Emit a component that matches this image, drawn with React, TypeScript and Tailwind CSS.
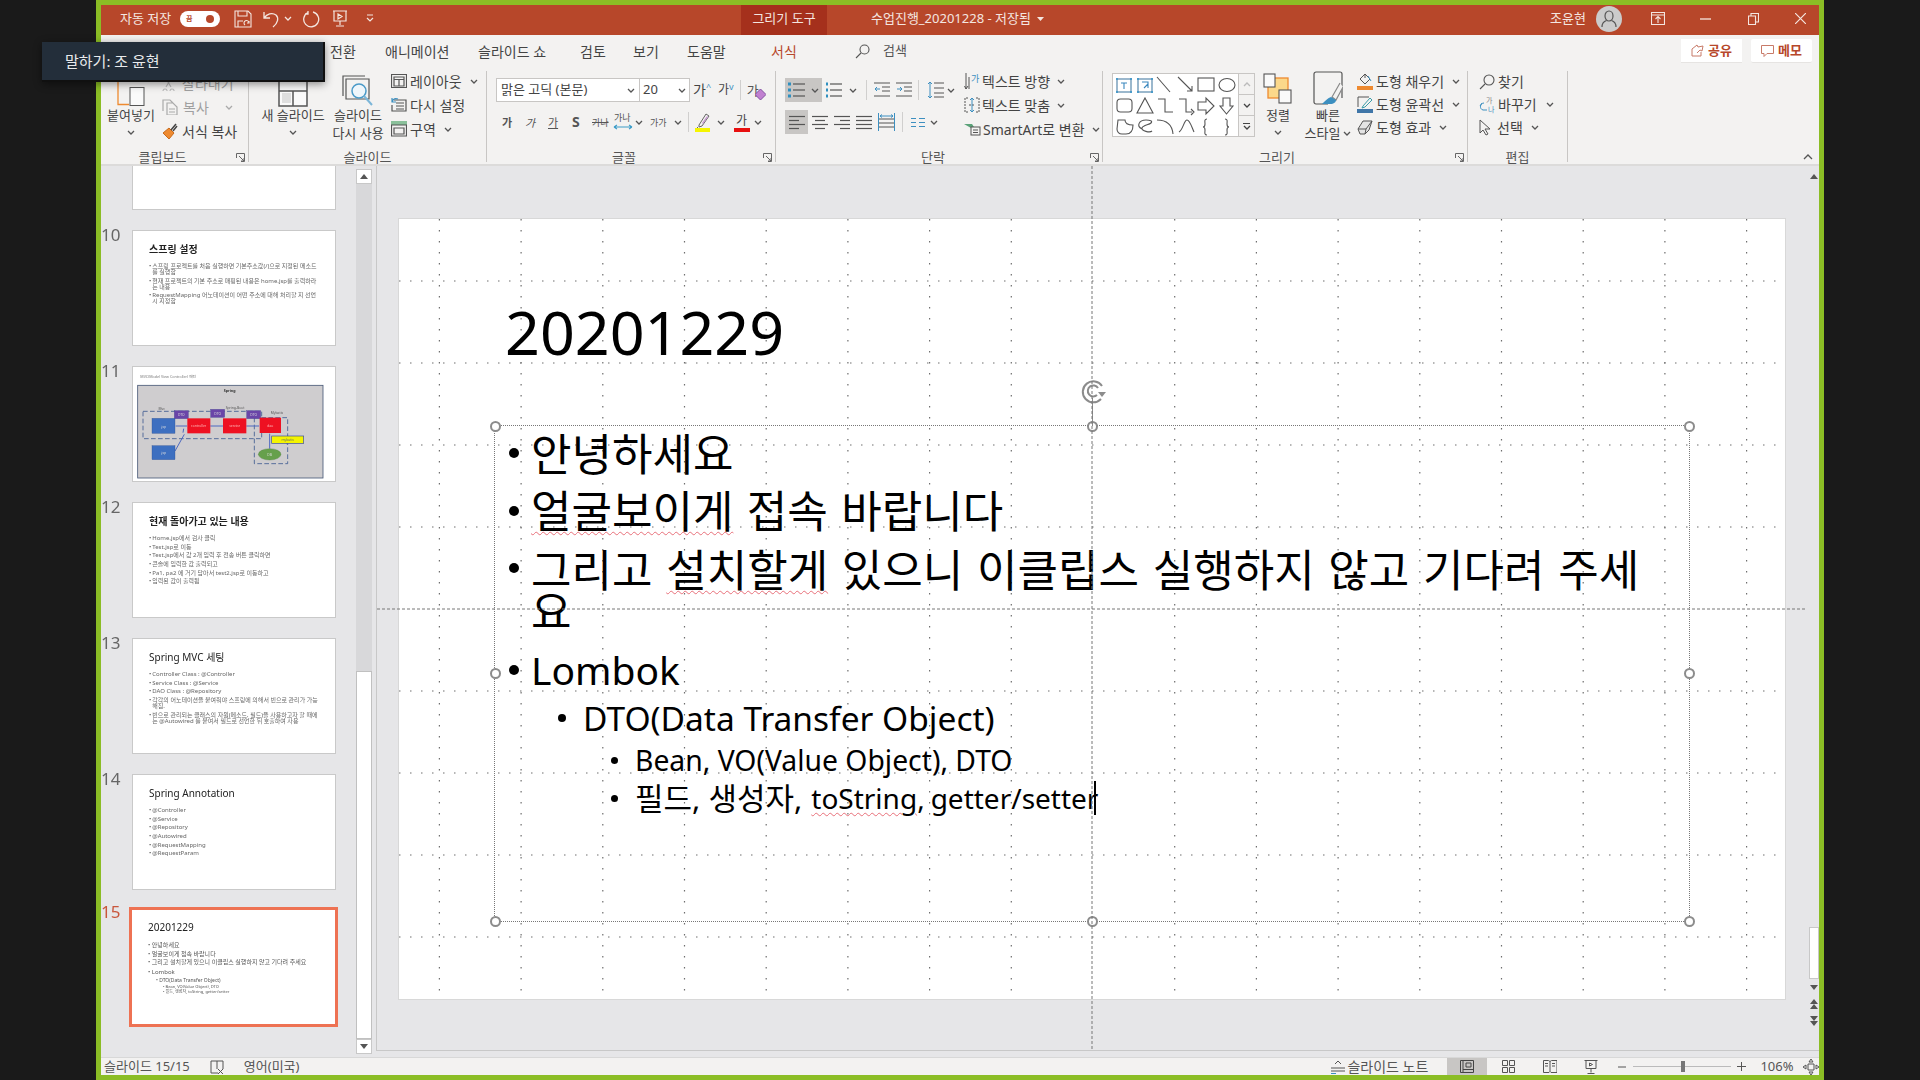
import React from 'react';

const Chev = ({ c = '#555', className = '' }: { c?: string; className?: string }) => (
  <svg width="8" height="5" viewBox="0 0 8 5" className={`shrink-0 ${className}`}>
    <path d="M1 1l3 3 3-3" fill="none" stroke={c} strokeWidth="1.3" />
  </svg>
);

const Launcher = () => (
  <svg width="9" height="9" viewBox="0 0 9 9" className="absolute right-[3px] bottom-[0px]">
    <path d="M.5 5V.5H8.5V8.5H5M3 3l5 5M8 5v3H5" fill="none" stroke="#666" strokeWidth="1" />
  </svg>
);

const SmallIcon = ({ children, w = 16, h = 16 }: { children: React.ReactNode; w?: number; h?: number }) => (
  <svg width={w} height={h} viewBox={`0 0 ${w} ${h}`} fill="none" stroke="#555" strokeWidth="1.2" className="shrink-0">
    {children}
  </svg>
);

// small ribbon command: icon + label + chevron
const Cmd = ({ icon, label, chev = true, muted = false, h = 'h-[24px]', gap = 'gap-[4px]', chevGap = 'ml-[5px]' }: { icon: React.ReactNode; label: string; chev?: boolean; muted?: boolean; h?: string; gap?: string; chevGap?: string }) => (
  <div className={`flex items-center text-[14px] ${h} ${gap} ${muted ? 'text-[#a0a0a0]' : 'text-[#444]'}`}>
    {icon}
    <span className="whitespace-nowrap">{label}</span>
    {chev && <Chev className={chevGap} c={muted ? '#aaa' : '#555'} />}
  </div>
);

const Group = ({ w, label, labelCls = '', launcher = false, children }: { w: string; label: string; labelCls?: string; launcher?: boolean; children: React.ReactNode }) => (
  <div className={`relative flex flex-col shrink-0 h-[91px] mt-[1px] border-r border-[#c8c6c4] ${w}`}>
    <div className="flex h-[77px] shrink-0">{children}</div>
    <div className={`text-center text-[13px] leading-[20px] text-[#555] -mt-[1px] shrink-0 ${labelCls}`}>{label}</div>
    {launcher && <Launcher />}
  </div>
);

const BigBtn = ({ icon, lines, chev = false, w }: { icon: React.ReactNode; lines: React.ReactNode[]; chev?: boolean; w: string }) => (
  <div className={`flex flex-col items-center shrink-0 ${w}`}>
    <div className="h-[36px] flex items-end justify-center">{icon}</div>
    {lines.map((l, i) => (
      <div key={i} className="leading-[17.500px] whitespace-nowrap text-[#444] flex items-center">{l}</div>
    ))}
    {chev && <Chev className="mt-[5px]" />}
  </div>
);

const BulletList = ({ numbered = false }: { numbered?: boolean }) => (
  <svg width="18" height="18" viewBox="0 0 18 18" fill="none" className="shrink-0">
    {[3, 9, 15].map((y) => (
      <g key={y}>
        <rect x={numbered ? 1 : 0} y={y - 1.5} width={numbered ? 2 : 3} height="3" fill="#2f8fc0" />
        <path d={`M5 ${y}H17`} stroke="#555" strokeWidth="1.2" />
      </g>
    ))}
  </svg>
);

const Align = ({ mode }: { mode: 'l' | 'c' | 'r' | 'j' }) => {
  const rows = mode === 'j' ? [16, 16, 16, 16] : [16, 10, 16, 10];
  return (
    <svg width="16" height="15" viewBox="0 0 16 15" className="shrink-0">
      {rows.map((w, i) => {
        const x = mode === 'c' ? (16 - w) / 2 : mode === 'r' ? 16 - w : 0;
        return <path key={i} d={`M${x} ${1.5 + i * 4}h${w}`} stroke="#555" strokeWidth="1.2" />;
      })}
    </svg>
  );
};

const Gallery = () => (
  <svg width="125" height="62" viewBox="0 0 125 62" fill="none" stroke="#555" strokeWidth="1.1" className="shrink-0">
    <rect x="4" y="5" width="14" height="13" stroke="#4a7ea5" />
    <rect x="25" y="5" width="14" height="13" stroke="#4a7ea5" />
    {[[4, 5], [18, 5], [4, 18], [18, 18], [25, 5], [39, 5], [25, 18], [39, 18]].map(([x, y]) => (
      <rect key={`${x}-${y}`} x={x - 1} y={y - 1} width="2" height="2" fill="#4a9ac8" stroke="none" />
    ))}
    <path d="M8 9h6M11 9v6M29 8h6v6M31 14l4-4" stroke="#3a87bd" />
    <path d="M44 3l13 15M65 3l14 14M79 12v5h-5" />
    <rect x="85" y="4" width="16" height="13" />
    <ellipse cx="114" cy="11" rx="8" ry="6.5" />
    <rect x="4" y="25" width="15" height="13" rx="3.5" />
    <path d="M32 24l8 15H24zM45 25h7v13h8M66 25h7v13h6M78 35l3 3-3 3M85 28h8v-4l8 8-8 8v-4h-8zM110 24h7v8h3l-6.500 8-6.500-8h3z" />
    <path d="M5 46h7c0 4 3 5 8 5 0 5-2 9-7 9H9c-3 0-5-2-5-5zM29 55c-6-3-3-9 4-9 4 0 7 1 5 3-2 2-8 2-9 5s8 5 10 3M44 46c7 0 15 3 16 14M66 58c4-2 5-12 8-12s5 8 7 12" />
    <path d="M94 45c-3 0-2 3-2 5s-1 3-2 3c1 0 2 1 2 3s-1 5 2 5M112 45c3 0 2 3 2 5s1 3 2 3c-1 0-2 1-2 3s1 5-2 5" />
  </svg>
);

const Handle = ({ className }: { className: string }) => (
  <div className={`absolute w-[11px] h-[11px] -ml-[5.5px] -mt-[5.5px] rounded-full bg-white border-2 border-[#8c8c8c] ${className}`} />
);

const Err = ({ children }: { children: React.ReactNode }) => (
  <span className="underline decoration-wavy decoration-[#e8707a] decoration-1 underline-offset-[3px]">{children}</span>
);

const ThumbShell = ({ num, active = false, children }: { num: number; active?: boolean; children: React.ReactNode }) => (
  <div className="flex">
    <div className={`w-[31px] text-[17px] leading-[18px] -mt-[4px] blur-[0.2px] ${active ? 'text-[#c9573d]' : 'text-[#666]'}`}>{num}</div>
    <div className={active ? 'w-[209px] h-[120px] -ml-[3px] border-[3px] border-[#ee7253] bg-white' : 'w-[204px] h-[116px] bg-white border border-[#c9c9c9]'}>
      {children}
    </div>
  </div>
);

const Thumb = ({ num, title, bold = false, items }: { num: number; title: string; bold?: boolean; items: string[] }) => (
  <ThumbShell num={num}>
    <div className="pl-[16px] pr-[17px] pt-[11px] blur-[0.3px]">
      <div className={`text-[10px] leading-[14px] text-[#222] ${bold ? 'font-bold' : ''}`}>{title}</div>
      <div className="mt-[7px] text-[6px] leading-[6px] text-[#666]">
        {items.map((t) => (
          <div key={t} className="flex gap-[1px] mb-[2.700px]">
            <span className="text-[#555]">•</span>
            <span>{t}</span>
          </div>
        ))}
      </div>
    </div>
  </ThumbShell>
);

const Diagram = () => (
  <svg width="204" height="116" viewBox="0 0 612 348" className="blur-[0.3px]">
    <text x="22" y="32" fontSize="11" fill="#777">MVC(Model View Controller) 패턴</text>
    <rect x="14" y="55" width="556" height="278" fill="#cfcdcf" stroke="#4a5a78" strokeWidth="2.500" />
    <text x="290" y="74" fontSize="11" fontWeight="bold" textAnchor="middle" fill="#333">Spring</text>
    <rect x="30" y="133" width="356" height="82" fill="none" stroke="#3e5a90" strokeWidth="2.500" strokeDasharray="14 7" />
    <rect x="364" y="152" width="100" height="138" fill="none" stroke="#3e5a90" strokeWidth="2.500" strokeDasharray="14 7" />
    <text x="86" y="130" fontSize="10" textAnchor="middle" fill="#555">Mvc</text>
    <text x="306" y="125" fontSize="10" textAnchor="middle" fill="#555">Spring-Boot</text>
    <text x="432" y="140" fontSize="10" textAnchor="middle" fill="#555">Mybatis</text>
    {[[124, 131], [233, 127], [341, 131]].map(([x, y]) => (
      <g key={x}>
        <rect x={x} y={y} width="42" height="24" fill="#6a45a8" stroke="#3c3c90" />
        <text x={x + 21} y={y + 16} fontSize="10" textAnchor="middle" fill="#ddd">DTO</text>
      </g>
    ))}
    <path d="M128 177H162M232 177H270M340 177H378M152 185l-2 12M126 252l28-50M410 200V245M462 222v10" stroke="#4c68c0" strokeWidth="3" fill="none" />
    <rect x="57" y="154" width="69" height="45" fill="#3d6fc0" stroke="#2d4f90" />
    <text x="91" y="182" fontSize="10" textAnchor="middle" fill="#ddd">.jsp</text>
    <rect x="57" y="236" width="69" height="42" fill="#3d6fc0" stroke="#2d4f90" />
    <text x="91" y="262" fontSize="10" textAnchor="middle" fill="#ddd">.jsp</text>
    <rect x="163" y="154" width="69" height="45" fill="#ee1122" />
    <text x="197" y="181" fontSize="10" textAnchor="middle" fill="#fbb">controller</text>
    <rect x="270" y="154" width="70" height="45" fill="#ee1122" />
    <text x="305" y="181" fontSize="10" textAnchor="middle" fill="#fbb">service</text>
    <rect x="380" y="152" width="64" height="46" fill="#ee1122" />
    <text x="412" y="180" fontSize="10" textAnchor="middle" fill="#fbb">dao</text>
    <rect x="416" y="207" width="96" height="22" fill="#f4f400" stroke="#3a4aa0" strokeWidth="2" />
    <text x="464" y="222" fontSize="10" textAnchor="middle" fill="#666">mybatis</text>
    <ellipse cx="410" cy="262" rx="34" ry="17" fill="#66a04c" stroke="#4c7c3a" />
    <text x="410" y="267" fontSize="10" textAnchor="middle" fill="#ddd">DB</text>
  </svg>
);

const thumbs = [
  { num: 10, title: '스프링 설정', bold: true, items: ['스프링 프로젝트를 처음 실행하면 기본주소값(/)으로 지정된 메소드를 실행함', '현재 프로젝트의 기본 주소로 매핑된 내용은 home.jsp를 출력하라는 내용', 'RequestMapping 어노테이션이 어떤 주소에 대해 처리할 지 선언 시 지정함'] },
  { num: 12, title: '현재 돌아가고 있는 내용', bold: true, items: ['Home.jsp에서 검사 클릭', 'Test.jsp로 이동', 'Test.jsp에서 값 2개 입력 후 전송 버튼 클릭하면', '콘솔에 입력한 값 출력되고', 'Pa1, pa2 에 거기 담아서 test2.jsp로 이동하고', '입력된 값이 출력됨'] },
  { num: 13, title: 'Spring MVC 세팅', items: ['Controller Class : @Controller', 'Service Class : @Service', 'DAO Class : @Repository', '각각의 어노테이션을 붙여줘야 스프링에 의해서 빈으로 관리가 가능해짐.', '빈으로 관리되는 클래스의 자원(메소드, 필드)을 사용하고자 할 때에는 @Autowired 를 붙여서 필드로 선언한 뒤 호출하여 사용'] },
  { num: 14, title: 'Spring Annotation', items: ['@Controller', '@Service', '@Repository', '@Autowired', '@RequestMapping', '@RequestParam'] },
];

const vGrid = [-8, -7, -6, -5, -4, -3, -2, -1, 1, 2, 3, 4, 5, 6, 7, 8].map((k) => 694 + k * 81.7);
const hGrid = [-4, -3, -2, -1, 1, 2, 3, 4].map((k) => 390 + k * 82);

function Level1({ cls, dot, children }: { cls: string; dot: string; children: React.ReactNode }) {
  return (
    <div className={`relative pl-[36px] ${cls}`}>
      <span className={`absolute left-[14px] w-[10px] h-[10px] rounded-full bg-black ${dot}`} />
      {children}
    </div>
  );
}

export default function App() {
  return (
    <div className="w-[1920px] h-[1080px] bg-[#1a1a1a] px-[96px] overflow-hidden relative font-['Noto_Sans','Noto_Sans_CJK_KR',sans-serif] text-[13px]">
      <div className="h-full border-x-[5px] border-y-[5px] border-[#8bbd25] flex flex-col bg-[#e6e6e8]">
        {/* title bar */}
        <div className="h-[30px] shrink-0 pb-[3px] bg-[#b7472a] flex items-center text-[#f4e6e0] text-[13px]">
          <span className="ml-[19px] w-[60px]">자동 저장</span>
          <div className="w-[40px] h-[16px] rounded-full bg-white flex items-center justify-between px-[6px]">
            <span className="text-[7px] text-[#b7472a] leading-none font-bold">끔</span>
            <span className="w-[8px] h-[8px] rounded-full bg-[#b7472a]" />
          </div>
          <svg width="18" height="18" viewBox="0 0 18 18" fill="none" stroke="#f4e6e0" strokeWidth="1.100" className="ml-[14px]">
            <path d="M1 1h13l3 3v13H1zM4 1v5h9V1M4 17v-6h5M11 15a2.500 2.500 0 1 1 4-2M15 11v2h-2" />
          </svg>
          <svg width="20" height="18" viewBox="0 0 20 18" fill="none" stroke="#f4e6e0" strokeWidth="1.300" className="ml-[10px]">
            <path d="M2 2v6h6M2 8c3-4 8-6 12-3 3 3 2 8-3 12" />
          </svg>
          <Chev c="#f4e6e0" className="ml-[2px]" />
          <svg width="18" height="18" viewBox="0 0 18 18" fill="none" stroke="#f4e6e0" strokeWidth="1.300" className="ml-[10px]">
            <path d="M11 2a7.500 7.500 0 1 1-5 .5M6 1v3H3" />
          </svg>
          <svg width="16" height="17" viewBox="0 0 16 17" fill="none" stroke="#f4e6e0" strokeWidth="1.200" className="ml-[12px]">
            <path d="M1 1h14M2 1v10h12V1M8 11v4M4 16h8M6 4l4 2.500L6 9z" />
          </svg>
          <svg width="8" height="9" viewBox="0 0 8 9" fill="none" stroke="#f4e6e0" strokeWidth="1.200" className="ml-[18px]">
            <path d="M1 1h6M1 4l3 3 3-3" />
          </svg>
          <div className="ml-[367px] w-[86px] h-[30px] self-start -mb-[3px] pb-[3px] bg-[#a5301c] flex items-center justify-center">그리기 도구</div>
          <span className="ml-[44px]">수업진행_20201228  -  저장됨</span>
          <svg width="7" height="4" viewBox="0 0 7 4" className="ml-[6px]"><path d="M0 0h7L3.500 4z" fill="#f4e6e0" /></svg>
          <span className="ml-auto">조윤현</span>
          <div className="ml-[10px] w-[26px] h-[26px] rounded-full bg-[#cbcbcb] flex items-center justify-center">
            <svg width="16" height="18" viewBox="0 0 16 18" fill="none" stroke="#555" strokeWidth="1.200">
              <ellipse cx="8" cy="6" rx="4" ry="5" />
              <path d="M1 17c0-4 3-6 4.500-6.500M15 17c0-4-3-6-4.500-6.500" />
            </svg>
          </div>
          <svg width="14" height="13" viewBox="0 0 14 13" fill="none" stroke="#f4e6e0" strokeWidth="1.100" className="ml-[29px]">
            <path d="M.5.500h13v12H.5zM1 3h12M7 11V5M4.500 7L7 4.500 9.500 7" />
          </svg>
          <svg width="11" height="2" viewBox="0 0 11 2" className="ml-[35px]"><path d="M0 1h11" stroke="#f4e6e0" strokeWidth="1.300" /></svg>
          <svg width="11" height="12" viewBox="0 0 11 12" fill="none" stroke="#f4e6e0" strokeWidth="1.100" className="ml-[37px]">
            <path d="M.5 3h7v8.500h-7zM3 3V.5h7.500V9H8" />
          </svg>
          <svg width="11" height="11" viewBox="0 0 11 11" stroke="#f4e6e0" strokeWidth="1.200" className="ml-[36px] mr-[13px]">
            <path d="M0 0l11 11M11 0L0 11" />
          </svg>
        </div>

        {/* tabs */}
        <div className="h-[35px] shrink-0 pb-[3px] bg-[#f3f2f1] flex items-center text-[14px] text-[#444]">
          <span className="ml-[140px] w-[89px]">디자인</span>
          <span className="w-[55px]">전환</span>
          <span className="w-[93px]">애니메이션</span>
          <span className="w-[102px]">슬라이드 쇼</span>
          <span className="w-[53px]">검토</span>
          <span className="w-[54px]">보기</span>
          <span className="w-[84px]">도움말</span>
          <span className="w-[84px] text-[#b7472a]">서식</span>
          <svg width="15" height="15" viewBox="0 0 15 15" fill="none" stroke="#555" strokeWidth="1.100">
            <circle cx="9.500" cy="5.500" r="4.500" />
            <path d="M6 9l-5 5" />
          </svg>
          <span className="ml-[13px] text-[13px] text-[#555]">검색</span>
          <div className="ml-auto w-[61px] h-[24px] text-[13px] bg-white flex items-center justify-center gap-[4px] text-[#b7472a] font-bold border-b border-[#e6e4e2]">
            <svg width="13" height="13" viewBox="0 0 13 13" fill="none" stroke="#c87a68" strokeWidth="1"><path d="M1 5v7h9V8M1 5l5-4 1 2 5-1-1 5-2-1-3 3" /></svg>
            공유
          </div>
          <div className="ml-[9px] mr-[7px] w-[61px] h-[24px] text-[13px] bg-white flex items-center justify-center gap-[4px] text-[#b7472a] font-bold rounded-[2px] border-b border-[#e6e4e2]">
            <svg width="13" height="12" viewBox="0 0 13 12" fill="none" stroke="#c87a68" strokeWidth="1"><path d="M.5.500h12v8H6l-3 3v-3H.5z" /></svg>
            메모
          </div>
        </div>

        {/* ribbon */}
        <div className="h-[96px] shrink-0 bg-[#f3f2f1] border-b-2 border-[#dcdbda] flex text-[13px]">
          <Group w="w-[148px]" label="클립보드" labelCls="pr-[24px]" launcher>
            <BigBtn
              w="w-[60px]"
              lines={['붙여넣기']}
              chev
              icon={
                <svg width="28" height="35" viewBox="0 0 28 35" fill="none">
                  <path d="M12 32.500H1V10" stroke="#ee8a30" strokeWidth="1.300" />
                  <rect x="13" y="15.500" width="14" height="18" fill="#fafafa" stroke="#555" />
                </svg>
              }
            />
            <div className="ml-[1px]">
              <Cmd muted label="잘라내기" chev={false} icon={<SmallIcon><path d="M3 14a2 2 0 1 0 .1 0M10 14a2 2 0 1 0 .1 0M4 12l6-10M9 12L3 2" stroke="#bbb" /></SmallIcon>} />
              <Cmd muted label="복사" chevGap="ml-[12px]" icon={<SmallIcon w={17}><path d="M1 12V1h7l3 3M5 4h6l4 4v8H5zM7 10h6M7 13h6" stroke="#aaa" /></SmallIcon>} />
              <Cmd label="서식 복사" chev={false} icon={
                <svg width="16" height="17" viewBox="0 0 16 17" fill="none">
                  <path d="M1 10l6-5 5 5-5 6z" fill="#ee8a30" stroke="#c76a1c" />
                  <path d="M9 7l5-6M11 8l4-5" stroke="#444" strokeWidth="1.500" />
                </svg>
              } />
            </div>
          </Group>

          <Group w="w-[238px]" label="슬라이드">
            <BigBtn
              w="w-[66px] ml-[11px]"
              lines={['새 슬라이드']}
              chev
              icon={
                <svg width="30" height="30" viewBox="0 0 30 30" fill="none" stroke="#555" strokeWidth="1.500">
                  <rect x="1" y="1" width="28" height="28" fill="#fafafa" />
                  <path d="M1 14h28M15 14v15" />
                  <rect x="4" y="16" width="9" height="10" fill="#dfdfdf" stroke="none" />
                </svg>
              }
            />
            <BigBtn
              w="w-[58px] ml-[3px]"
              lines={['슬라이드', '다시 사용']}
              icon={
                <svg width="32" height="32" viewBox="0 0 32 32" fill="none" stroke="#555" strokeWidth="1.200">
                  <path d="M1 21V1h22M4 24V4h23v20z" />
                  <circle cx="17" cy="16" r="7" stroke="#4a9ac8" strokeWidth="1.500" fill="#eef6fb" />
                  <path d="M22 21l8 9" stroke="#7cb6d8" strokeWidth="2" />
                </svg>
              }
            />
            <div className="ml-[4px] -mt-[2px]">
              <Cmd label="레이아웃" gap="gap-[3px]" icon={<SmallIcon><path d="M.5 1.500h15v13H.5zM3 4h10v9H3zM3 6.500h10M8 6.500V13" /></SmallIcon>} />
              <Cmd label="다시 설정" chev={false} gap="gap-[3px]" icon={<SmallIcon><path d="M3 3h12v11H1V8M5 6h8M5 9h8M5 12h8" /><path d="M7 2c-3-1-5 0-6 3M1 1v4h4" stroke="#3c8fc0" /></SmallIcon>} />
              <Cmd label="구역" gap="gap-[3px]" icon={<SmallIcon><rect x="0" y="0" width="16" height="4" fill="#8ac09a" stroke="none" /><path d="M.5 4h15v11H.5zM3 7h10v6H3z" /></SmallIcon>} />
            </div>
          </Group>

          <Group w="w-[289px]" label="글꼴" labelCls="pr-[14px]" launcher>
            <div className="pt-[7px] pl-[9px]">
              <div className="flex items-center h-[24px]">
                <div className="w-[144px] h-[24px] bg-white border border-[#c8c6c4] flex items-center justify-between px-[4px] text-[#444]">
                  맑은 고딕 (본문)<Chev />
                </div>
                <div className="w-[50px] h-[24px] bg-white border border-l-0 border-[#c8c6c4] flex items-center justify-between px-[3px] text-[#444]">
                  20<Chev />
                </div>
                <span className="ml-[3px] text-[14px] text-[#444] leading-none">가</span>
                <span className="text-[#3c8fc0] text-[9px] -mt-[8px] leading-none">^</span>
                <span className="ml-[7px] text-[12px] text-[#444] leading-none">가</span>
                <span className="text-[#3c8fc0] text-[9px] -mt-[8px] leading-none">v</span>
                <div className="ml-[6px] w-px h-[20px] bg-[#d0cfce]" />
                <span className="ml-[6px] text-[13px] leading-none text-[#555] relative">
                  가
                  <svg width="11" height="11" viewBox="0 0 11 11" className="absolute left-[8px] top-[5px]"><path d="M5.500 0L11 5.500 5.500 11 0 5.500z" fill="#c080d0" stroke="#8050a0" /></svg>
                </span>
              </div>
              <div className="flex items-center h-[24px] mt-[8px] text-[#555] leading-none">
                <span className="ml-[6px] font-bold text-[11px] w-[23px]">가</span>
                <span className="text-[11px] italic w-[23px]">가</span>
                <span className="text-[11px] underline w-[24px]">가</span>
                <span className="font-bold text-[14px] w-[20px]">S</span>
                <span className="text-[9px] line-through w-[21px]">가나</span>
                <svg width="20" height="20" viewBox="0 0 20 20" className="mr-[2px]">
                  <text x="1" y="9" fontSize="9" fill="#555">가나</text>
                  <path d="M1 15h18M1 15l3-2M1 15l3 2M19 15l-3-2M19 15l-3 2" stroke="#3c9cc8" strokeWidth="1.100" fill="none" />
                </svg>
                <Chev />
                <span className="ml-[7px] text-[9px] w-[24px]">가가</span>
                <Chev />
                <div className="ml-[6px] w-px h-[20px] bg-[#d0cfce]" />
                <svg width="16" height="19" viewBox="0 0 16 19" fill="none" className="ml-[6px]">
                  <path d="M4 12L11 1l3 2-7 10-3 1zM3 14l-1 1" stroke="#666" />
                  <path d="M7 10l5-7 1 1-5 7z" fill="#c59ad0" />
                  <rect x="0" y="15" width="15" height="4" fill="#f5f500" />
                </svg>
                <Chev className="ml-[6px]" />
                <svg width="16" height="19" viewBox="0 0 16 19" className="ml-[9px]">
                  <text x="2" y="12" fontSize="12" fill="#444">가</text>
                  <rect x="0" y="15" width="16" height="4" fill="#e81010" />
                </svg>
                <Chev className="ml-[4px]" />
              </div>
            </div>
          </Group>

          <Group w="w-[327px]" label="단락" labelCls="pr-[12px]" launcher>
            <div className="pt-[7px] pl-[9px] w-[182px] shrink-0">
              <div className="flex items-center h-[24px]">
                <div className="w-[37px] h-[24px] bg-[#c8c6c4] flex items-center justify-between px-[3px]"><BulletList /><Chev /></div>
                <div className="ml-[3px] flex items-center gap-[6px]"><BulletList numbered /><Chev /></div>
                <div className="ml-[9px] w-px h-[20px] bg-[#d0cfce]" />
                <svg width="16" height="16" viewBox="0 0 16 16" fill="none" stroke="#555" className="ml-[7px]"><path d="M0 1h16M8 5h8M8 9h8M0 14h16" /><path d="M6 7H1M3 5L1 7l2 2" stroke="#3c8fc0" /></svg>
                <svg width="16" height="16" viewBox="0 0 16 16" fill="none" stroke="#555" className="ml-[6px]"><path d="M0 1h16M8 5h8M8 9h8M0 14h16" /><path d="M1 7h5M4 5l2 2-2 2" stroke="#3c8fc0" /></svg>
                <div className="ml-[6px] w-px h-[20px] bg-[#d0cfce]" />
                <svg width="18" height="18" viewBox="0 0 18 18" fill="none" stroke="#555" className="ml-[8px]"><path d="M7 2h10M7 7h10M7 12h10M7 16h10" /><path d="M3 1v16M1 3l2-2 2 2M1 15l2 2 2-2" stroke="#3c8fc0" /></svg>
                <Chev className="ml-[2px]" />
              </div>
              <div className="flex items-center h-[24px] mt-[8px]">
                <div className="w-[23px] h-[24px] bg-[#c8c6c4] flex items-center justify-center"><Align mode="l" /></div>
                <div className="ml-[4px]"><Align mode="c" /></div>
                <div className="ml-[6px]"><Align mode="r" /></div>
                <div className="ml-[6px]"><Align mode="j" /></div>
                <svg width="17" height="18" viewBox="0 0 17 18" fill="none" className="ml-[6px]"><path d="M1 6h15M1 10h15M1 14h15" stroke="#555" /><path d="M.500 0v18M16.500 0v18M2 3h13M2 3l2-1.500M2 3l2 1.500M15 3l-2-1.500M15 3l-2 1.500" stroke="#3c8fc0" /></svg>
                <div className="ml-[7px] w-px h-[20px] bg-[#d0cfce]" />
                <svg width="14" height="11" viewBox="0 0 14 11" fill="none" stroke="#3c8fc0" strokeWidth="1.200" className="ml-[8px]"><path d="M0 1.500h5M0 5.500h5M0 9.500h5M8 1.500h6M8 5.500h6M8 9.500h6" /></svg>
                <Chev className="ml-[5px]" />
              </div>
            </div>
            <div className="pl-[6px] -mt-[2px]">
              <Cmd label="텍스트 방향" gap="gap-[2px]" icon={<svg width="16" height="18" viewBox="0 0 16 18" fill="none" stroke="#555"><path d="M2 1v16M5 5v12M.5 14L2 17l2-3" /><text x="7" y="10" fontSize="9" fill="#3c8fc0" stroke="none">가</text></svg>} />
              <Cmd label="텍스트 맞춤" gap="gap-[2px]" icon={<svg width="16" height="16" viewBox="0 0 16 16" fill="none" stroke="#555"><path d="M4 1H1v14h3M12 1h3v14h-3M5 8h6" strokeDasharray="2 1" /><path d="M8 1v14M6 3l2-2 2 2M6 13l2 2 2-2" stroke="#3c8fc0" /></svg>} />
              <Cmd label="SmartArt로 변환" gap="gap-[2px]" icon={<svg width="17" height="16" viewBox="0 0 17 16" fill="none"><path d="M0 3h8l2 3-3 1z" fill="#5aa278" /><rect x="7" y="6" width="9" height="8" fill="#f3f2f1" stroke="#555" /><path d="M9 9h5M9 11.500h5" stroke="#555" /></svg>} />
            </div>
          </Group>

          <Group w="w-[365px]" label="그리기" labelCls="pr-[16px]" launcher>
            <div className="ml-[9px] mt-[2px] h-[64px] flex border border-[#c8c6c4] bg-white shrink-0">
              <Gallery />
              <div className="w-[16px] flex flex-col bg-[#f3f2f1] border-l border-[#c8c6c4] shrink-0">
                <div className="h-[21px] border-b border-[#c8c6c4] flex items-center justify-center"><svg width="8" height="5" viewBox="0 0 8 5"><path d="M1 4l3-3 3 3" fill="none" stroke="#bbb" strokeWidth="1.300" /></svg></div>
                <div className="h-[21px] border-b border-[#c8c6c4] flex items-center justify-center"><Chev c="#444" /></div>
                <div className="h-[20px] flex flex-col items-center justify-center gap-[1px]"><div className="w-[7px] h-px bg-[#444]" /><Chev c="#444" /></div>
              </div>
            </div>
            <BigBtn
              w="w-[40px] ml-[3px]"
              lines={['정렬']}
              chev
              icon={
                <svg width="30" height="31" viewBox="0 0 30 31" fill="none" stroke="#555" strokeWidth="1.100" className="mb-[3px]">
                  <rect x="5" y="5" width="20" height="20" fill="#fbd88a" stroke="#ee8a30" strokeWidth="1.300" />
                  <rect x="1" y="1" width="11" height="13" fill="#fafafa" />
                  <rect x="16" y="17" width="12" height="13" fill="#fafafa" />
                </svg>
              }
            />
            <BigBtn
              w="w-[46px] ml-[7px]"
              lines={['빠른', <>스타일<Chev className="ml-[3px]" /></>]}
              icon={
                <svg width="30" height="35" viewBox="0 0 30 35" fill="none" stroke="#555" strokeWidth="1.200" className="mb-[1px]">
                  <path d="M15 33H3a2 2 0 0 1-2-2V3a2 2 0 0 1 2-2h24a2 2 0 0 1 2 2v24" />
                  <path d="M27 12l-8 14 4 3 7-13" fill="#f3f2f1" stroke="#888" />
                  <path d="M18 26c-3 1-6 4-9 7h8c4 0 6-2 6-4z" fill="#3c8fc0" stroke="none" />
                </svg>
              }
            />
            <div className="ml-[6px] -mt-[1.500px]">
              <Cmd h="h-[23px]" label="도형 채우기" gap="gap-[3px]" icon={<svg width="16" height="17" viewBox="0 0 16 17" fill="none" stroke="#555"><path d="M8 1l5 5-5 5-5-5zM8 1v4" /><path d="M11 3l3 5" stroke="#3c8fc0" /><rect x="0" y="13" width="16" height="4" fill="#ee8a30" stroke="none" /></svg>} />
              <Cmd h="h-[23px]" label="도형 윤곽선" gap="gap-[3px]" icon={<svg width="16" height="17" viewBox="0 0 16 17" fill="none" stroke="#555"><path d="M1 11V1h11" /><path d="M6 10l7-8 2 2-7 7-3 1z" stroke="#3c9ca8" /><rect x="0" y="13" width="16" height="4" fill="#3f76a8" stroke="none" /></svg>} />
              <Cmd h="h-[23px]" label="도형 효과" gap="gap-[3px]" icon={<svg width="16" height="15" viewBox="0 0 16 15" fill="none" stroke="#555"><path d="M1 9l5-8h9l-3 9-4 4H3z" fill="#e4e4e4" /><path d="M6 1v0M1 9h8l6-8M9 9l-1 5" /></svg>} />
            </div>
          </Group>

          <Group w="w-[100px]" label="편집">
            <div className="ml-[11px] -mt-[1px]">
              <Cmd h="h-[23px]" label="찾기" chev={false} gap="gap-[3px]" icon={<svg width="16" height="16" viewBox="0 0 16 16" fill="none" stroke="#555" strokeWidth="1.100"><circle cx="10" cy="6" r="5" /><path d="M6 10l-5 5" /></svg>} />
              <Cmd h="h-[23px]" label="바꾸기" chevGap="ml-[8px]" gap="gap-[1px]" icon={<svg width="18" height="18" viewBox="0 0 18 18" fill="none"><text x="7" y="7" fontSize="7" fill="#888">가</text><text x="9" y="16" fontSize="7" fill="#3c8fc0">나</text><path d="M8 14H4c-4-1-3-7 1-7M1 10l2-3" stroke="#3c8fc0" /></svg>} />
              <Cmd h="h-[23px]" label="선택" chevGap="ml-[3px]" gap="gap-[5px]" icon={<svg width="13" height="17" viewBox="0 0 13 17" fill="none" stroke="#555"><path d="M1 1v13l3-3 3 5 2-1-3-5h5z" /></svg>} />
            </div>
          </Group>

          <div className="flex-1 flex items-end justify-end pb-[4px] pr-[6px]">
            <svg width="10" height="6" viewBox="0 0 10 6"><path d="M1 5l4-4 4 4" fill="none" stroke="#555" strokeWidth="1.300" /></svg>
          </div>
        </div>

        {/* workspace */}
        <div className="flex-1 min-h-0 flex relative">
          {/* slide sorter */}
          <div className="w-[255px] shrink-0 overflow-hidden flex flex-col gap-[20px] bg-[#e6e6e8]">
            <div className="ml-[31px] w-[204px] h-[44px] shrink-0 bg-white border border-t-0 border-[#c9c9c9]" />
            <Thumb {...thumbs[0]} />
            <ThumbShell num={11}><Diagram /></ThumbShell>
            <Thumb {...thumbs[1]} />
            <Thumb {...thumbs[2]} />
            <Thumb {...thumbs[3]} />
            <div className="-mt-[3px]">
              <ThumbShell num={15} active>
                <div className="pl-[16px] pr-[17px] pt-[10px] blur-[0.3px] text-[#555] text-[6px] leading-[6px]">
                  <div className="text-[10px] leading-[14px] text-[#222]">20201229</div>
                  <div className="mt-[8px]">• 안녕하세요</div>
                  <div className="mt-[2.500px]">• 얼굴보이게 접속 바랍니다</div>
                  <div className="mt-[3px] leading-[5px]">• 그리고 설치할게 있으니 이클립스 실행하지 않고 기다려 주세요</div>
                  <div className="mt-[4px]">• Lombok</div>
                  <div className="pl-[8px] text-[5px] mt-[2px]">• DTO(Data Transfer Object)</div>
                  <div className="pl-[15px] text-[4px] leading-[5.500px] mt-[1px]">• Bean, VO(Value Object), DTO</div>
                  <div className="pl-[15px] text-[4px] leading-[5.500px]">• 필드, 생성자, toString, getter/setter</div>
                </div>
              </ThumbShell>
            </div>
          </div>

          {/* sorter scrollbar */}
          <div className="w-[16px] shrink-0 mb-[6px] mt-[3px] flex flex-col bg-[#d8d8da]">
            <div className="h-[15px] shrink-0 bg-white border border-[#c8c8c8] flex items-center justify-center"><svg width="8" height="5" viewBox="0 0 8 5"><path d="M0 5l4-5 4 5z" fill="#555" /></svg></div>
            <div className="h-[487px] shrink-0" />
            <div className="h-[368px] shrink-0 bg-white border border-[#c0c0c0]" />
            <div className="flex-1" />
            <div className="h-[15px] shrink-0 bg-white border border-[#c8c8c8] flex items-center justify-center"><svg width="8" height="5" viewBox="0 0 8 5"><path d="M0 0l4 5 4-5z" fill="#555" /></svg></div>
          </div>

          {/* slide edit pane */}
          <div className="flex-1 min-w-0 flex ml-[4px] border-l border-[#c8c8c8] border-b mb-[6px] relative">
            <div className="flex-1 min-w-0 pl-[21px] pt-[52px]">
              <div className="relative w-[1388px] h-[782px] bg-white border border-[#d8d8d8] text-black">
                <svg width="1386" height="780" className="absolute left-0 top-0">
                  {hGrid.map((y) => (
                    <path key={y} d={`M0 ${y}H1387`} stroke="#6e6e6e" strokeWidth="1.200" strokeDasharray="1.500 9.500" />
                  ))}
                  {vGrid.map((x) => (
                    <path key={x} d={`M${x} 0V780`} stroke="#6e6e6e" strokeWidth="1.200" strokeDasharray="1.500 9.500" />
                  ))}
                </svg>

                <div className="relative pl-[106px] pt-[80px] text-[61px] leading-[66px]">20201229</div>

                {/* selected text box */}
                <div className="absolute left-[95px] top-[206px] w-[1196px] h-[497px] border border-dotted border-[#777]">
                  <Level1 cls="h-[56px] leading-[56px] text-[44px]" dot="top-[22px]">안녕하세요</Level1>
                  <Level1 cls="h-[58px] leading-[58px] text-[44px] [word-spacing:2px]" dot="top-[24px]"><Err>얼굴보이게</Err> 접속 바랍니다</Level1>
                  <Level1 cls="h-[105px] leading-[42px] pt-[9px] text-[44px] [word-spacing:2.300px]" dot="top-[23px]">그리고 <Err>설치할게</Err> 있으니 이클립스 실행하지 않고 기다려 주세<br />요</Level1>
                  <Level1 cls="h-[50px] leading-[50px] text-[39px]" dot="top-[20px]">Lombok</Level1>
                  <div className="flex items-center h-[46px] text-[33.500px] leading-[46px] pl-[63px]">
                    <span className="w-[8px] h-[8px] rounded-full bg-black mr-[17px]" />DTO(Data Transfer Object)
                  </div>
                  <div className="flex items-center h-[38px] text-[28.300px] pl-[116px]">
                    <span className="w-[7px] h-[7px] rounded-full bg-black mr-[17px]" />Bean, VO(Value Object), DTO
                  </div>
                  <div className="flex items-center h-[38px] text-[28px] pl-[116px]">
                    <span className="w-[7px] h-[7px] rounded-full bg-black mr-[17px]" /><span className="text-[31px]">필드, 생성자,</span><span className="ml-[9px] mr-[6px]"><Err>toString</Err>,</span> getter/setter
                    <span className="w-[1.500px] h-[34px] bg-black -ml-[4px]" />
                  </div>
                  <Handle className="left-0 top-0" />
                  <Handle className="left-1/2 top-0" />
                  <Handle className="left-full top-0" />
                  <Handle className="left-0 top-1/2" />
                  <Handle className="left-full top-1/2" />
                  <Handle className="left-0 top-full" />
                  <Handle className="left-1/2 top-full" />
                  <Handle className="left-full top-full" />
                  <div className="absolute left-1/2 -top-[28px] w-px h-[28px] bg-[#8c8c8c]" />
                  <svg width="26" height="26" viewBox="0 0 26 26" fill="none" className="absolute left-[586px] -top-[47px]" stroke="#8c8c8c" strokeWidth="2">
                    <path d="M20 20a10.500 10.500 0 1 1 1-13M16 16a5.500 5.500 0 1 1 1-7" />
                    <path d="M17 13h8l-4 5z" fill="#8c8c8c" stroke="none" />
                  </svg>
                </div>
              </div>
            </div>

            {/* center guides run past the slide */}
            <svg width="1443" height="892" className="absolute left-0 top-0 pointer-events-none">
              <path d="M0 443H1430" stroke="#777" strokeDasharray="3 2" />
              <path d="M715 0V885" stroke="#777" strokeDasharray="3 2" />
            </svg>

            {/* pane scrollbar */}
            <div className="w-[10px] shrink-0 flex flex-col items-center pt-[8px] relative">
              <svg width="8" height="5" viewBox="0 0 8 5"><path d="M0 5l4-5 4 5z" fill="#555" /></svg>
              <div className="mt-[748px] w-[10px] h-[52px] bg-white border border-[#c8c8c8]" />
              <svg width="8" height="5" viewBox="0 0 8 5" className="mt-[6px]"><path d="M0 0l4 5 4-5z" fill="#555" /></svg>
              <svg width="8" height="10" viewBox="0 0 8 10" className="mt-[9px]"><path d="M0 5l4-5 4 5zM0 10l4-5 4 5z" fill="#555" /></svg>
              <svg width="8" height="10" viewBox="0 0 8 10" className="mt-[7px]"><path d="M0 0l4 5 4-5zM0 5l4 5 4-5z" fill="#555" /></svg>
            </div>
          </div>
        </div>

        {/* status bar */}
        <div className="h-[18px] shrink-0 bg-[#f3f2f1] border-t border-[#d8d8d8] flex items-center text-[13px] text-[#555] leading-none">
          <span className="ml-[3px]">슬라이드 15/15</span>
          <svg width="14" height="14" viewBox="0 0 14 14" fill="none" stroke="#555" className="ml-[20px]"><path d="M1 1h12v8M1 1v12h7M7 1v8M8 9l5 5M13 9l-5 5" /></svg>
          <span className="ml-[20px]">영어(미국)</span>
          <svg width="14" height="14" viewBox="0 0 14 14" fill="none" stroke="#555" className="ml-[1032px]"><path d="M0 8h14M0 11h14M4 4l3-3 3 3" /><path d="M0 13.500h5" stroke="#3c8fc0" /></svg>
          <span className="ml-[2px] text-[14px]">슬라이드 노트</span>
          <div className="ml-[19px] w-[40px] h-full bg-[#c8c6c4] flex items-center justify-center">
            <svg width="14" height="13" viewBox="0 0 14 13" fill="none" stroke="#444"><path d="M.5.500h13v12H.5zM3 .5v12M3 9.500h10.500M6 3h5v4H6z" /></svg>
          </div>
          <svg width="13" height="13" viewBox="0 0 13 13" fill="none" stroke="#555" className="ml-[15px]"><path d="M.5.500h5v5h-5zM7.500.500h5v5h-5zM.5 7.500h5v5h-5zM7.500 7.500h5v5h-5z" /></svg>
          <svg width="14" height="13" viewBox="0 0 14 13" fill="none" stroke="#555" className="ml-[28px]"><path d="M.5.500h5l1.500 1 1.500-1h5.500v12H8l-1-1-1 1H.5zM7 1.500v10M2 3.500h3M2 6h3M9 3.500h3M9 6h3" /></svg>
          <svg width="14" height="14" viewBox="0 0 14 14" fill="none" stroke="#555" className="ml-[27px]"><path d="M.5.500h13M2 .5v8h10v-8M7 8.500v4M3.500 13.500h7M5.500 3l3 1.500-3 1.500z" /></svg>
          <svg width="8" height="2" viewBox="0 0 8 2" className="ml-[20px]"><path d="M0 1h8" stroke="#555" /></svg>
          <div className="ml-[7px] w-[98px] h-px bg-[#bbb] relative">
            <div className="absolute left-[48px] -top-[5px] w-[4px] h-[11px] bg-[#777]" />
          </div>
          <svg width="9" height="9" viewBox="0 0 9 9" className="ml-[6px]"><path d="M0 4.500h9M4.500 0v9" stroke="#555" /></svg>
          <span className="ml-[14px]">106%</span>
          <svg width="16" height="16" viewBox="0 0 16 16" fill="none" stroke="#555" className="ml-auto"><path d="M5 5h6v6H5zM8 0l2 3H6zM8 16l2-3H6zM0 8l3-2v4zM16 8l-3-2v4z" /></svg>
        </div>
      </div>

      {/* speaker tooltip */}
      <div className="absolute left-[42px] top-[42px] w-[283px] h-[40px] bg-[#232e3a] border-b-2 border-r-2 border-[#101010] shadow-[0_2px_8px_rgba(0,0,0,0.45)] flex items-center pl-[23px] text-[15px] text-[#e8eaec]">
        말하기: 조 윤현
      </div>
    </div>
  );
}
